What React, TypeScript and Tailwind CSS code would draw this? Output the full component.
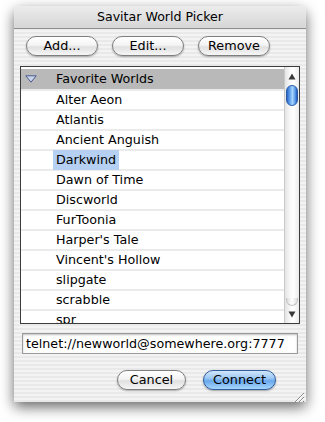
import React from "react";

const worlds = [
  "Alter Aeon",
  "Atlantis",
  "Ancient Anguish",
  "Darkwind",
  "Dawn of Time",
  "Discworld",
  "FurToonia",
  "Harper's Tale",
  "Vincent's Hollow",
  "slipgate",
  "scrabble",
  "spr",
];

const font = "font-['DejaVu_Sans','Lucida_Grande',sans-serif]";

function PillButton({ label, className }: { label: string; className: string }) {
  return (
    <button
      className={`flex h-[20px] items-center justify-center rounded-full border border-[#7e7e7e] bg-[linear-gradient(#ffffff_0%,#f4f4f4_45%,#e0e0e0_55%,#f6f6f6_100%)] text-[12.8px] text-black shadow-[0_1px_2px_rgba(0,0,0,0.3)] ${className}`}
    >
      {label}
    </button>
  );
}

function Scrollbar() {
  return (
    <div className="flex w-[15px] shrink-0 flex-col border-l border-[#c8c8c8] bg-[linear-gradient(90deg,#e4e4e4,#fafafa_40%,#ffffff_60%,#ececec)]">
      <div className="flex h-[14px] items-end justify-center pb-[1px]">
        <svg width="8" height="7" viewBox="0 0 8 7">
          <path d="M4 0.5 L7.5 6.5 L0.5 6.5 Z" fill="#3a3a3a" />
        </svg>
      </div>
      <div className="mx-auto mt-[4px] h-[21px] w-[12px] rounded-full border border-[#2c5ea8] bg-[linear-gradient(90deg,#2a62c4,#6fb0f4_35%,#a8d4fb_55%,#4c90e4_85%,#2458b8)]" />
      <div className="flex-1" />
      <div className="mx-auto h-[8px] w-[12px] rounded-b-full border-x border-b border-[#c4c4c4] bg-[linear-gradient(90deg,#dcdcdc,#ffffff_50%,#e0e0e0)]" />
      <div className="flex h-[17px] items-center justify-center">
        <svg width="8" height="7" viewBox="0 0 8 7">
          <path d="M0.5 0.5 L7.5 0.5 L4 6.5 Z" fill="#3a3a3a" />
        </svg>
      </div>
    </div>
  );
}

export default function App() {
  return (
    <div className={`h-[422px] w-[325px] bg-white pl-[14px] pt-[6px] ${font}`}>
      <div className="flex h-[396px] w-[292px] flex-col overflow-hidden rounded-t-[6px] bg-[repeating-linear-gradient(#f3f3f3_0px,#f3f3f3_2px,#e9e9e9_2px,#e9e9e9_4px)] shadow-[0_5px_14px_rgba(0,0,0,0.6)]">
        <div className="flex h-[23px] shrink-0 items-center justify-center border-b border-[#8e8e8e] bg-[linear-gradient(#ececec,#d6d6d6)] text-[12.6px] text-black">
          Savitar World Picker
        </div>

        <div className="flex gap-[14px] pl-[12px] pt-[7px]">
          <PillButton label="Add..." className="w-[72px]" />
          <PillButton label="Edit..." className="w-[72px]" />
          <PillButton label="Remove" className="w-[72px]" />
        </div>

        <div className="mx-[6px] mt-[10px] flex h-[258px] border border-[#3c3c3c] bg-white">
          <div className="flex-1 overflow-hidden pt-[2px]">
            <div className="flex h-[20px] items-center bg-[#b9b9b9] text-[12.7px] text-black">
              <div className="flex w-[35px] justify-start pl-[4px]">
                <svg width="12" height="8" viewBox="0 0 12 8">
                  <path d="M0.8 0.8 L11.2 0.8 L6 7.2 Z" fill="#c9d4ea" stroke="#4a5a8c" strokeWidth="1" />
                </svg>
              </div>
              <span>Favorite Worlds</span>
            </div>
            {worlds.map((w) => (
              <div
                key={w}
                className="flex h-[20px] items-center border-t-2 border-[#ebebeb] pl-[32px] text-[12.7px] text-black"
              >
                <span className={w === "Darkwind" ? "bg-[#b5d0f2] px-[3px]" : "px-[3px]"}>{w}</span>
              </div>
            ))}
          </div>
          <Scrollbar />
        </div>

        <div className="mx-[8px] mt-[9px] flex h-[22px] items-center border border-[#9a9a9a] bg-white pl-[3px] text-[12.7px] text-black shadow-[inset_0_1px_2px_rgba(0,0,0,0.25)]">
          telnet://newworld@somewhere.org:7777
        </div>

        <div className="flex flex-1 items-start justify-end pr-[30px] pt-[16px]">
          <PillButton label="Cancel" className="w-[69px]" />
          <button className="ml-[17px] flex h-[20px] w-[73px] items-center justify-center rounded-full border border-[#2f5c9c] bg-[linear-gradient(#d2e6fb_0%,#9cc8f4_40%,#6aa8ec_55%,#a6d6fc_100%)] text-[12.8px] text-black shadow-[0_1px_2px_rgba(0,0,0,0.35)]">
            Connect
          </button>
        </div>
        <div className="flex justify-end pb-[1px] pr-[1px]">
          <svg width="13" height="13" viewBox="0 0 13 13">
            <path d="M12 3 L3 12 M12 7 L7 12 M12 11 L11 12" stroke="#8a8a8a" strokeWidth="1" />
            <path d="M12 4 L4 12 M12 8 L8 12" stroke="#ffffff" strokeWidth="1" />
          </svg>
        </div>
      </div>
    </div>
  );
}
